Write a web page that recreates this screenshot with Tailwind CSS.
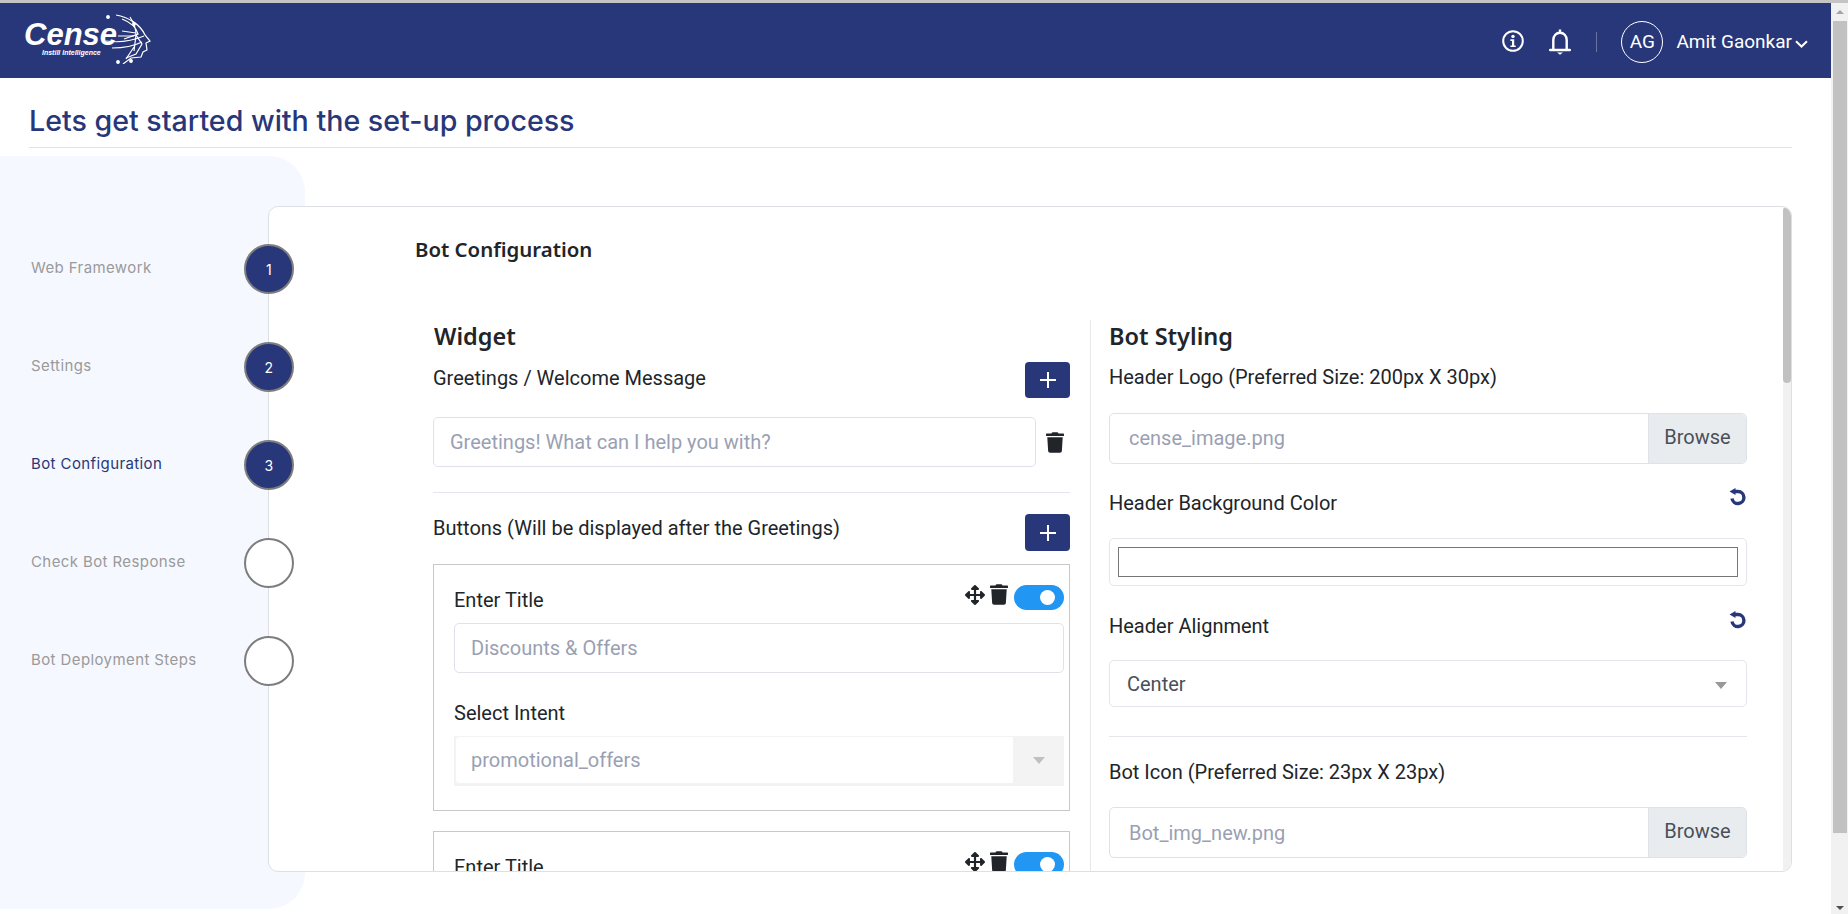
<!DOCTYPE html>
<html lang="en">
<head>
    <meta charset="UTF-8">
    <meta name="viewport" content="width=device-width, initial-scale=1.0">
    <title>Cense - Set-up</title>
    <script src="https://cdn.jsdelivr.net/npm/@tailwindcss/browser@4"></script>
</head>
<body class="h-[914px] overflow-hidden bg-white font-['Roboto',sans-serif] text-[#212529]">
    <div class="h-[3px] bg-[#c4c4c4]"></div>
    <div class="flex h-[911px]">
        <main class="w-[1831px] overflow-hidden">
            <!-- navbar -->
            <nav class="h-[75px] bg-[#283779] flex items-center justify-between text-white pt-[3px]">
                <div class="relative w-[130px] h-[54px] ml-[24px] -mt-[6px]">
                    <span class="absolute left-0 top-[9px] font-['Liberation_Sans',sans-serif] font-bold italic text-[31px] leading-[28px]">Cense</span>
                    <span class="absolute left-[18px] top-[37px] font-['Liberation_Sans',sans-serif] font-bold italic text-[7px] leading-[8px] whitespace-nowrap">Instill Intelligence</span>
                    <svg class="absolute left-[80px] top-0" width="50" height="52" viewBox="0 0 50 52" fill="none" stroke="white" stroke-width="1.200">
                        <path d="M12 3c12 2 24 9 29 20l5 6-4 2 1 7-4 2-2 5-10 1-8 6"/>
                        <path d="M18 7c8 3 14 8 16 15l-14 5M26 5c4 6 6 12 6 18l6 9-6 10-10 4"/>
                        <path d="M2 29c14 2 26 0 38-5M14 24l16 0M18 19l14 2M8 36c12 0 22-2 30-6M32 23l-2 16M22 47l8-12"/>
                        <circle cx="4" cy="5" r="1.300" fill="white"/><circle cx="27" cy="49" r="1.300" fill="white"/><circle cx="14" cy="50" r="1.300" fill="white"/><circle cx="30" cy="12" r="1.300" fill="white"/>
                    </svg>
                </div>
                <div class="flex items-center">
                    <svg class="w-[22px] h-[22px] -mt-[3px]" viewBox="0 0 22 22" fill="none"><circle cx="11" cy="11" r="9.800" stroke="white" stroke-width="2"/><circle cx="11" cy="6.400" r="1.700" fill="white"/><path d="M8.400 9.300h3.800v6.200h1.500v1.600H8.400v-1.600H10v-4.600H8.400z" fill="white"/></svg>
                    <svg class="w-[22px] h-[26px] ml-[25px] -mt-[1px]" viewBox="0 0 22 26" fill="none"><path d="M11 0.500v3M4.300 20.500V11c0-4.200 3-7.300 6.700-7.300s6.700 3.100 6.700 7.300v9.500" stroke="white" stroke-width="2.400"/><path d="M1.200 21h19.600" stroke="white" stroke-width="2.600" stroke-linecap="round"/><path d="M8 23.500h6l-3 2.300z" fill="white"/></svg>
                    <div class="w-px h-[20px] bg-white/30 ml-[25px]"></div>
                    <div class="w-[42px] h-[42px] ml-[24px] rounded-full border border-white flex items-center justify-center text-[19px]">AG</div>
                    <span class="ml-[13px] text-[19px]">Amit Gaonkar</span>
                    <svg class="w-[13px] h-[8px] ml-[3px] mr-[23px] mt-[3px]" viewBox="0 0 13 8" fill="none"><path d="M1 1.200l5.500 5.300L12 1.200" stroke="white" stroke-width="2"/></svg>
                </div>
            </nav>

            <div class="ml-[29px] w-[1763px] h-[70px] border-b border-[#e3e3e3] pt-[25px]">
                <h1 class="font-['Inter',sans-serif] font-medium text-[28.600px] leading-[36px] text-[#283779]">Lets get started with the set-up process</h1>
            </div>

            <div class="relative mt-[8px] h-[753px] flex items-start">
                <!-- sidebar backdrop -->
                <div class="absolute left-0 top-0 w-[305px] h-[753px] bg-[#f5f8ff] rounded-tr-[36px] rounded-br-[36px]"></div>

                <!-- steps -->
                <ol class="relative z-10 w-[294px] pt-[88px] pl-[31px] flex flex-col gap-[48px] font-['Inter',sans-serif] text-[15px] tracking-[0.4px] text-[#9a9a9a]">
                    <li class="flex items-center justify-between h-[50px]"><span class="-mt-[2px]">Web Framework</span><span class="w-[50px] h-[50px] rounded-full bg-[#283779] border-2 border-[#7d7d7d] flex items-center justify-center text-[14px] text-white">1</span></li>
                    <li class="flex items-center justify-between h-[50px]"><span class="-mt-[2px]">Settings</span><span class="w-[50px] h-[50px] rounded-full bg-[#283779] border-2 border-[#7d7d7d] flex items-center justify-center text-[14px] text-white">2</span></li>
                    <li class="flex items-center justify-between h-[50px]"><span class="-mt-[2px] text-[#283779]">Bot Configuration</span><span class="w-[50px] h-[50px] rounded-full bg-[#283779] border-2 border-[#7d7d7d] flex items-center justify-center text-[14px] text-white">3</span></li>
                    <li class="flex items-center justify-between h-[50px]"><span class="-mt-[2px]">Check Bot Response</span><span class="w-[50px] h-[50px] rounded-full bg-white border-2 border-[#7d7d7d]"></span></li>
                    <li class="flex items-center justify-between h-[50px]"><span class="-mt-[2px]">Bot Deployment Steps</span><span class="w-[50px] h-[50px] rounded-full bg-white border-2 border-[#7d7d7d]"></span></li>
                </ol>

                <!-- card -->
                <section class="relative -ml-[26px] mt-[50px] w-[1524px] h-[666px] bg-white border border-[#dcdfe4] rounded-[10px] overflow-hidden">
                    <h2 class="font-['Noto_Sans',sans-serif] font-semibold text-[20.400px] leading-[28px] ml-[146px] mt-[28px]">Bot Configuration</h2>

                    <div class="flex ml-[164px] mt-[56px]">
                        <!-- widget col -->
                        <div class="w-[637px] shrink-0">
                            <h3 class="font-['Noto_Sans',sans-serif] font-semibold text-[23.500px] leading-[32px] ml-px mt-px">Widget</h3>
                            <div class="flex justify-between items-start mt-[16px]">
                                <label class="text-[20px] leading-[24px] -mt-[2px]">Greetings / Welcome Message</label>
                                <button class="w-[45px] h-[36px] bg-[#283779] rounded-[4px] flex items-center justify-center -mt-[6px]"><svg class="w-[18px] h-[18px]" viewBox="0 0 18 18"><path d="M9 1v16M1 9h16" stroke="white" stroke-width="2"/></svg></button>
                            </div>
                            <div class="flex items-center mt-[19px]">
                                <div class="w-[603px] h-[50px] border border-[#dfe3e9] rounded-[5px] pl-[16px] flex items-center text-[20px] text-[#9a9fb3]">Greetings! What can I help you with?</div>
                                <svg class="w-[18px] h-[21px] ml-[10px]" viewBox="0 0 448 512"><path fill="#212529" d="M432 32H312l-9.400-18.700A24 24 0 0 0 281.100 0H166.800a23.720 23.720 0 0 0-21.400 13.300L136 32H16A16 16 0 0 0 0 48v32a16 16 0 0 0 16 16h416a16 16 0 0 0 16-16V48a16 16 0 0 0-16-16zM53.200 467a48 48 0 0 0 47.900 45h245.800a48 48 0 0 0 47.900-45L416 128H32z"/></svg>
                            </div>
                            <hr class="border-[#e3e6ea] mt-[25px]">
                            <div class="flex justify-between items-start mt-[21px]">
                                <label class="text-[20px] leading-[24px] mt-[2px]">Buttons (Will be displayed after the Greetings)</label>
                                <button class="w-[45px] h-[37px] bg-[#283779] rounded-[4px] flex items-center justify-center"><svg class="w-[18px] h-[18px]" viewBox="0 0 18 18"><path d="M9 1v16M1 9h16" stroke="white" stroke-width="2"/></svg></button>
                            </div>

                            <div class="h-[247px] border border-[#c6c8cc] mt-[13px] pl-[20px] pr-[5px]">
                                <div class="flex justify-between items-start pt-[20px] h-[58px]">
                                    <label class="text-[20px] leading-[24px] mt-[3px]">Enter Title</label>
                                    <div class="flex items-start gap-[5px]">
                                        <svg class="w-[20px] h-[20px]" viewBox="0 0 512 512"><path fill="#212529" d="M352.201 425.775l-79.196 79.196c-9.373 9.373-24.568 9.373-33.941 0l-79.196-79.196c-15.119-15.119-4.411-40.971 16.971-40.970h51.162L228 284H127.196v51.162c0 21.382-25.851 32.090-40.971 16.971L7.029 272.937c-9.373-9.373-9.373-24.569 0-33.941L86.225 159.800c15.119-15.119 40.971-4.411 40.971 16.971V228H228V127.196h-51.230c-21.382 0-32.090-25.851-16.971-40.971l79.196-79.196c9.373-9.373 24.568-9.373 33.941 0l79.196 79.196c15.119 15.119 4.411 40.971-16.971 40.971h-51.162V228h100.804v-51.162c0-21.382 25.851-32.090 40.970-16.971l79.196 79.196c9.373 9.373 9.373 24.569 0 33.941L425.773 352.200c-15.119 15.119-40.971 4.411-40.970-16.971V284H284v100.804h51.230c21.382 0 32.090 25.851 16.971 40.971z"/></svg>
                                        <svg class="w-[18px] h-[21px] -mt-[1px]" viewBox="0 0 448 512"><path fill="#212529" d="M432 32H312l-9.400-18.700A24 24 0 0 0 281.100 0H166.800a23.720 23.720 0 0 0-21.400 13.300L136 32H16A16 16 0 0 0 0 48v32a16 16 0 0 0 16 16h416a16 16 0 0 0 16-16V48a16 16 0 0 0-16-16zM53.200 467a48 48 0 0 0 47.900 45h245.800a48 48 0 0 0 47.900-45L416 128H32z"/></svg>
                                        <span class="relative w-[50px] h-[25px] rounded-full bg-[#2196f3] ml-px"><span class="absolute right-[9px] top-[5px] w-[15px] h-[15px] rounded-full bg-white"></span></span>
                                    </div>
                                </div>
                                <div class="h-[50px] border border-[#dfe3e9] rounded-[5px] pl-[16px] flex items-center text-[20px] text-[#9a9fb3]">Discounts &amp; Offers</div>
                                <label class="block text-[20px] leading-[24px] mt-[28px]">Select Intent</label>
                                <div class="flex h-[50px] mt-[11px] bg-[#f3f3f3] pl-[2px] pt-[1px] pb-[3px]">
                                    <div class="flex-1 bg-white rounded-l-[4px] pl-[15px] flex items-center text-[20px] text-[#9a9fb3]">promotional_offers</div>
                                    <div class="w-[51px] flex items-center justify-center"><span class="w-0 h-0 border-x-[6px] border-x-transparent border-t-[7px] border-t-[#c0c0c0]"></span></div>
                                </div>
                            </div>

                            <div class="h-[120px] border border-[#c6c8cc] mt-[20px] pl-[20px] pr-[5px]">
                                <div class="flex justify-between items-start pt-[20px]">
                                    <label class="text-[20px] leading-[24px] mt-[3px]">Enter Title</label>
                                    <div class="flex items-start gap-[5px]">
                                        <svg class="w-[20px] h-[20px]" viewBox="0 0 512 512"><path fill="#212529" d="M352.201 425.775l-79.196 79.196c-9.373 9.373-24.568 9.373-33.941 0l-79.196-79.196c-15.119-15.119-4.411-40.971 16.971-40.970h51.162L228 284H127.196v51.162c0 21.382-25.851 32.090-40.971 16.971L7.029 272.937c-9.373-9.373-9.373-24.569 0-33.941L86.225 159.800c15.119-15.119 40.971-4.411 40.971 16.971V228H228V127.196h-51.230c-21.382 0-32.090-25.851-16.971-40.971l79.196-79.196c9.373-9.373 24.568-9.373 33.941 0l79.196 79.196c15.119 15.119 4.411 40.971-16.971 40.971h-51.162V228h100.804v-51.162c0-21.382 25.851-32.090 40.970-16.971l79.196 79.196c9.373 9.373 9.373 24.569 0 33.941L425.773 352.200c-15.119 15.119-40.971 4.411-40.970-16.971V284H284v100.804h51.230c21.382 0 32.090 25.851 16.971 40.971z"/></svg>
                                        <svg class="w-[18px] h-[21px] -mt-[1px]" viewBox="0 0 448 512"><path fill="#212529" d="M432 32H312l-9.400-18.700A24 24 0 0 0 281.100 0H166.800a23.720 23.720 0 0 0-21.400 13.300L136 32H16A16 16 0 0 0 0 48v32a16 16 0 0 0 16 16h416a16 16 0 0 0 16-16V48a16 16 0 0 0-16-16zM53.200 467a48 48 0 0 0 47.900 45h245.800a48 48 0 0 0 47.900-45L416 128H32z"/></svg>
                                        <span class="relative w-[50px] h-[25px] rounded-full bg-[#2196f3] ml-px"><span class="absolute right-[9px] top-[5px] w-[15px] h-[15px] rounded-full bg-white"></span></span>
                                    </div>
                                </div>
                            </div>
                        </div>

                        <!-- styling col -->
                        <div class="w-[656px] ml-[20px] border-l border-[#e8e8e8] pl-[18px] shrink-0 mt-px h-[560px]">
                            <h3 class="font-['Noto_Sans',sans-serif] font-semibold text-[23.500px] leading-[32px]">Bot Styling</h3>
                            <label class="block text-[20px] leading-[24px] mt-[13px]">Header Logo (Preferred Size: 200px X 30px)</label>
                            <div class="flex h-[51px] w-[638px] mt-[24px] border border-[#dfe3e9] rounded-[5px] overflow-hidden">
                                <div class="flex-1 pl-[19px] flex items-center text-[20px] text-[#9a9fb3] pb-[2px]">cense_image.png</div>
                                <div class="w-[98px] bg-[#e9ecef] border-l border-[#dfe3e9] flex items-center justify-center text-[20px] text-[#495057] pb-[3px]">Browse</div>
                            </div>
                            <div class="flex justify-between w-[638px] mt-[27px]">
                                <label class="text-[20px] leading-[24px]">Header Background Color</label>
                                <svg class="w-[18px] h-[18px] -mt-[3px]" viewBox="0 0 18 18" fill="none"><path d="M6 3.500h3a6 6 0 1 1-6 7" stroke="#283779" stroke-width="3.400"/><path d="M0.500 3.500L6.500 0v7z" fill="#283779"/></svg>
                            </div>
                            <div class="w-[638px] h-[48px] mt-[23px] border border-[#e3e6ea] rounded-[5px] pl-[8px] pr-[8px] pt-[8px]">
                                <div class="h-[30px] bg-white border border-[#767676]"></div>
                            </div>
                            <div class="flex justify-between w-[638px] mt-[28px]">
                                <label class="text-[20px] leading-[24px]">Header Alignment</label>
                                <svg class="w-[18px] h-[18px] -mt-[3px]" viewBox="0 0 18 18" fill="none"><path d="M6 3.500h3a6 6 0 1 1-6 7" stroke="#283779" stroke-width="3.400"/><path d="M0.500 3.500L6.500 0v7z" fill="#283779"/></svg>
                            </div>
                            <div class="flex items-center justify-between w-[638px] h-[47px] mt-[22px] border border-[#e3e6ea] rounded-[5px] pl-[17px] pr-[19px]">
                                <span class="text-[20px] text-[#495057]">Center</span>
                                <span class="w-0 h-0 border-x-[6px] border-x-transparent border-t-[7px] border-t-[#999] mt-[3px]"></span>
                            </div>
                            <hr class="w-[638px] border-[#e3e6ea] mt-[29px]">
                            <label class="block text-[20px] leading-[24px] mt-[23px]">Bot Icon (Preferred Size: 23px X 23px)</label>
                            <div class="flex h-[51px] w-[638px] mt-[23px] border border-[#dfe3e9] rounded-[5px] overflow-hidden">
                                <div class="flex-1 pl-[19px] flex items-center text-[20px] text-[#9a9fb3]">Bot_img_new.png</div>
                                <div class="w-[98px] bg-[#e9ecef] border-l border-[#dfe3e9] flex items-center justify-center text-[20px] text-[#495057] pb-[3px]">Browse</div>
                            </div>
                        </div>
                    </div>

                    <!-- inner scrollbar -->
                    <div class="absolute right-0 top-0 bottom-0 w-[8px] bg-[#f1f1f1]"><div class="h-[176px] bg-[#c1c1c1] rounded-[4px]"></div></div>
                </section>
            </div>
        </main>

        <!-- page scrollbar -->
        <aside class="w-[17px] bg-[#f1f1f1] flex flex-col items-center">
            <span class="w-0 h-0 mt-[7px] border-x-[4px] border-x-transparent border-b-[4px] border-b-[#a3a3a3]"></span>
            <div class="w-[14px] h-[812px] mt-[7px] bg-[#c1c1c1]"></div>
            <span class="w-0 h-0 mt-[73px] border-x-[4px] border-x-transparent border-t-[4px] border-t-[#505050]"></span>
        </aside>
    </div>
</body>
</html>
